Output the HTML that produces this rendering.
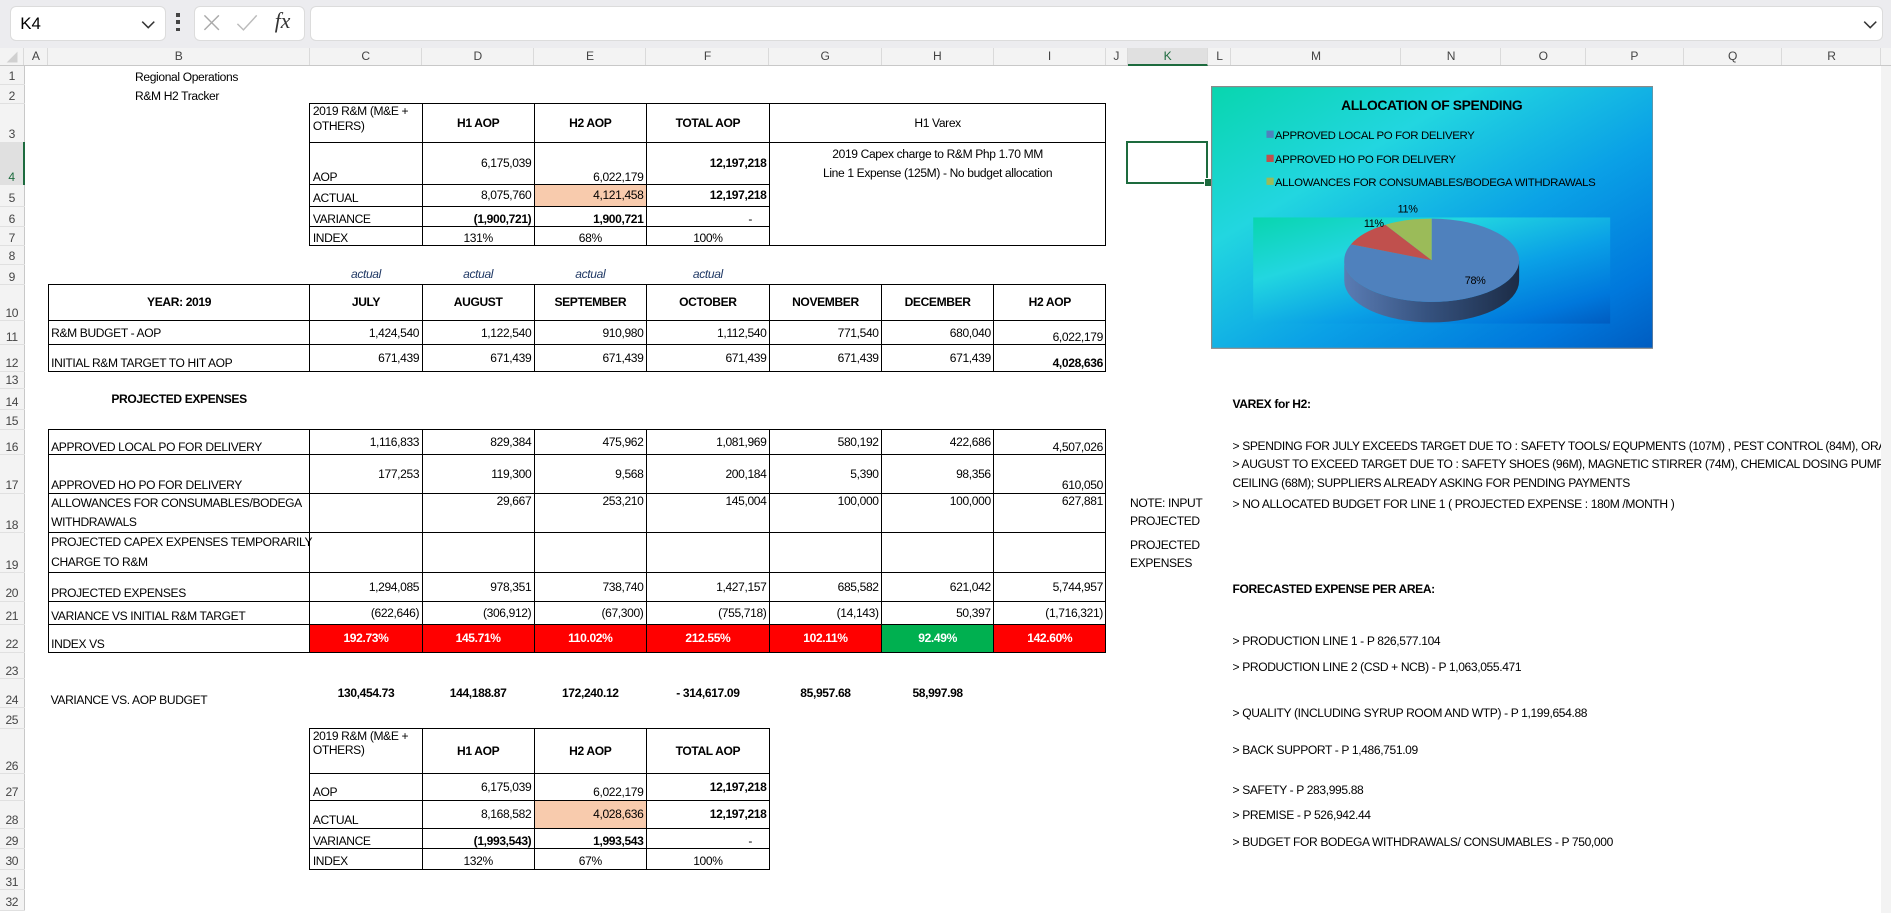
<!DOCTYPE html>
<html><head><meta charset="utf-8">
<style>
html,body{margin:0;padding:0;background:#fff;}
body{width:1568px;height:757px;zoom:1.20600;overflow:hidden;position:relative;font-family:"Liberation Sans",sans-serif;font-size:10px;letter-spacing:-0.3px;color:#000;}
.fb{position:absolute;left:0;top:0;width:1568px;height:40px;background:#ececef;}
.box{position:absolute;background:#fff;border:1px solid #dcdcdc;border-radius:5px;}
.hdr{position:absolute;left:0;top:40px;width:1568px;height:15px;background:#f3f3f3;border-bottom:1px solid #c8c8c8;box-sizing:border-box;}
.hdr div{position:absolute;top:0;height:14px;line-height:14px;text-align:center;color:#444;font-size:10px;border-right:1px solid #dadada;box-sizing:border-box;}
table.s{position:absolute;left:0;top:55px;border-collapse:collapse;table-layout:fixed;width:1568px;}
table.s td{padding:0 2px;white-space:nowrap;vertical-align:bottom;overflow:visible;line-height:12px;}
td.rh{background:#f3f3f3;color:#444;text-align:center;border-right:1px solid #c8c8c8;border-bottom:1px solid #e0e0e0;padding:0!important;}
.b{border:1px solid #000;}
.r{text-align:right;}.c{text-align:center;}.bd{font-weight:bold;}
.m{vertical-align:middle!important;}.t{vertical-align:top!important;}
.w{white-space:normal!important;}
.pe{background:#f8cbad;}
.red{background:#ff0000;color:#fff;font-weight:bold;text-align:center;vertical-align:middle!important;}
.grn{background:#00b050;color:#fff;font-weight:bold;text-align:center;vertical-align:middle!important;}
.it{font-style:italic;color:#1f3864;text-align:center;}
.tx{position:absolute;white-space:nowrap;line-height:12px;}
</style></head><body>
<div class="fb">
 <div class="box" style="left:8px;top:5px;width:128px;height:27px;"><span style="position:absolute;left:8px;top:6px;font-size:14px;letter-spacing:0;">K4</span>
 <svg style="position:absolute;left:108px;top:9px" width="12" height="10"><path d="M1 3 L6 8 L11 3" stroke="#333" stroke-width="1.3" fill="none"/></svg></div>
 <div style="position:absolute;left:146px;top:11px;width:3px;height:16px;"><div style="width:3px;height:3px;background:#444;margin-bottom:3px"></div><div style="width:3px;height:3px;background:#444;margin-bottom:3px"></div><div style="width:3px;height:3px;background:#444"></div></div>
 <div class="box" style="left:161px;top:5px;width:90px;height:27px;">
  <svg style="position:absolute;left:6px;top:5px" width="16" height="16"><path d="M2 2 L14 14 M14 2 L2 14" stroke="#aaa" stroke-width="1.2"/></svg>
  <svg style="position:absolute;left:33px;top:5px" width="20" height="16"><path d="M2 9 L7 14 L18 2" stroke="#bbb" stroke-width="1.2" fill="none"/></svg>
  <span style="position:absolute;left:66px;top:2px;font-family:'Liberation Serif',serif;font-style:italic;font-size:18px;letter-spacing:0;color:#333">fx</span>
 </div>
 <div class="box" style="left:257px;top:5px;width:1303px;height:27px;">
  <svg style="position:absolute;right:4px;top:9px" width="12" height="10"><path d="M1 3 L6 8 L11 3" stroke="#333" stroke-width="1.3" fill="none"/></svg></div>
</div>
<div class="hdr">
 <div style="left:0;width:20px;"><svg width="14" height="14"><path d="M12 3 L12 12 L3 12 Z" fill="#d0d0d0"/></svg></div>
 <div style="left:20px;width:20px;">A</div><div style="left:40px;width:217px;">B</div><div style="left:257px;width:93px;">C</div><div style="left:350px;width:93px;">D</div><div style="left:443px;width:93px;">E</div><div style="left:536px;width:102px;">F</div><div style="left:638px;width:93px;">G</div><div style="left:731px;width:93px;">H</div><div style="left:824px;width:93px;">I</div><div style="left:917px;width:18px;">J</div>
 <div style="left:935px;width:67px;background:#e0e0e0;color:#1d6b3e;border-bottom:2px solid #1d6b3e;height:15px;">K</div>
 <div style="left:1002px;width:19px;">L</div><div style="left:1021px;width:141px;">M</div><div style="left:1162px;width:83px;">N</div><div style="left:1245px;width:70px;">O</div><div style="left:1315px;width:81px;">P</div><div style="left:1396px;width:82px;">Q</div><div style="left:1478px;width:82px;">R</div>
</div>
<table class="s">
<colgroup><col style="width:20px"><col style="width:20px"><col style="width:217px"><col style="width:93px"><col style="width:93px"><col style="width:93px"><col style="width:102px"><col style="width:93px"><col style="width:93px"><col style="width:93px"><col style="width:651px"></colgroup>
<tr style="height:15px"><td class="rh">1</td><td></td><td style="padding-left:72px">Regional Operations</td><td colspan="8"></td></tr>
<tr style="height:16px"><td class="rh">2</td><td></td><td style="padding-left:72px">R&amp;M H2 Tracker</td><td colspan="8"></td></tr>
<tr style="height:32px"><td class="rh">3</td><td></td><td></td><td class="b w t">2019 R&amp;M (M&amp;E + OTHERS)</td><td class="b c bd m">H1 AOP</td><td class="b c bd m">H2 AOP</td><td class="b c bd m">TOTAL AOP</td><td class="b c m" colspan="3">H1 Varex</td><td></td></tr>
<tr style="height:35px"><td class="rh" style="background:#e0e0e0;color:#1d6b3e;border-right:2px solid #1d6b3e">4</td><td></td><td></td><td class="b">AOP</td><td class="b r m">6,175,039</td><td class="b r">6,022,179</td><td class="b r bd m">12,197,218</td><td class="b c t" colspan="3" rowspan="4" style="padding-top:2px;line-height:16px">2019 Capex charge to R&amp;M Php 1.70 MM<br>Line 1 Expense (125M) - No budget allocation</td><td></td></tr>
<tr style="height:18px"><td class="rh">5</td><td></td><td></td><td class="b">ACTUAL</td><td class="b r m">8,075,760</td><td class="b r m pe">4,121,458</td><td class="b r bd m">12,197,218</td><td></td></tr>
<tr style="height:17px"><td class="rh">6</td><td></td><td></td><td class="b">VARIANCE</td><td class="b r bd">(1,900,721)</td><td class="b r bd">1,900,721</td><td class="b r" style="padding-right:14px">-</td><td></td></tr>
<tr style="height:16px"><td class="rh">7</td><td></td><td></td><td class="b">INDEX</td><td class="b c">131%</td><td class="b c">68%</td><td class="b c">100%</td><td></td></tr>
<tr style="height:15px"><td class="rh">8</td><td colspan="10"></td></tr>
<tr style="height:17px"><td class="rh">9</td><td></td><td></td><td class="it m">actual</td><td class="it m">actual</td><td class="it m">actual</td><td class="it m">actual</td><td colspan="4"></td></tr>
<tr style="height:30px"><td class="rh">10</td><td></td><td class="b c bd m">YEAR: 2019</td><td class="b c bd m">JULY</td><td class="b c bd m">AUGUST</td><td class="b c bd m">SEPTEMBER</td><td class="b c bd m">OCTOBER</td><td class="b c bd m">NOVEMBER</td><td class="b c bd m">DECEMBER</td><td class="b c bd m">H2 AOP</td><td></td></tr>
<tr style="height:20px"><td class="rh">11</td><td></td><td class="b m">R&amp;M BUDGET - AOP</td><td class="b r m">1,424,540</td><td class="b r m">1,122,540</td><td class="b r m">910,980</td><td class="b r m">1,112,540</td><td class="b r m">771,540</td><td class="b r m">680,040</td><td class="b r">6,022,179</td><td></td></tr>
<tr style="height:22px"><td class="rh">12</td><td></td><td class="b">INITIAL R&amp;M TARGET TO HIT AOP</td><td class="b r m">671,439</td><td class="b r m">671,439</td><td class="b r m">671,439</td><td class="b r m">671,439</td><td class="b r m">671,439</td><td class="b r m">671,439</td><td class="b r bd">4,028,636</td><td></td></tr>
<tr style="height:14px"><td class="rh">13</td><td colspan="10"></td></tr>
<tr style="height:18px"><td class="rh">14</td><td></td><td class="c bd m">PROJECTED EXPENSES</td><td colspan="8"></td></tr>
<tr style="height:16px"><td class="rh">15</td><td colspan="10"></td></tr>
<tr style="height:21px"><td class="rh">16</td><td></td><td class="b">APPROVED LOCAL PO FOR DELIVERY</td><td class="b r m">1,116,833</td><td class="b r m">829,384</td><td class="b r m">475,962</td><td class="b r m">1,081,969</td><td class="b r m">580,192</td><td class="b r m">422,686</td><td class="b r">4,507,026</td><td></td></tr>
<tr style="height:32px"><td class="rh">17</td><td></td><td class="b">APPROVED HO PO FOR DELIVERY</td><td class="b r m">177,253</td><td class="b r m">119,300</td><td class="b r m">9,568</td><td class="b r m">200,184</td><td class="b r m">5,390</td><td class="b r m">98,356</td><td class="b r">610,050</td><td></td></tr>
<tr style="height:32px"><td class="rh">18</td><td></td><td class="b" style="line-height:16px">ALLOWANCES FOR CONSUMABLES/BODEGA<br>WITHDRAWALS</td><td class="b r t"></td><td class="b r t">29,667</td><td class="b r t">253,210</td><td class="b r t">145,004</td><td class="b r t">100,000</td><td class="b r t">100,000</td><td class="b r t">627,881</td><td></td></tr>
<tr style="height:33px"><td class="rh">19</td><td></td><td class="b" style="line-height:16px">PROJECTED CAPEX EXPENSES TEMPORARILY<br>CHARGE TO R&amp;M</td><td class="b"></td><td class="b"></td><td class="b"></td><td class="b"></td><td class="b"></td><td class="b"></td><td class="b"></td><td></td></tr>
<tr style="height:24px"><td class="rh">20</td><td></td><td class="b">PROJECTED EXPENSES</td><td class="b r m">1,294,085</td><td class="b r m">978,351</td><td class="b r m">738,740</td><td class="b r m">1,427,157</td><td class="b r m">685,582</td><td class="b r m">621,042</td><td class="b r m">5,744,957</td><td></td></tr>
<tr style="height:19px"><td class="rh">21</td><td></td><td class="b">VARIANCE VS INITIAL R&amp;M TARGET</td><td class="b r m">(622,646)</td><td class="b r m">(306,912)</td><td class="b r m">(67,300)</td><td class="b r m">(755,718)</td><td class="b r m">(14,143)</td><td class="b r m">50,397</td><td class="b r m">(1,716,321)</td><td></td></tr>
<tr style="height:23px"><td class="rh">22</td><td></td><td class="b">INDEX VS</td><td class="b red">192.73%</td><td class="b red">145.71%</td><td class="b red">110.02%</td><td class="b red">212.55%</td><td class="b red">102.11%</td><td class="b grn">92.49%</td><td class="b red">142.60%</td><td></td></tr>
<tr style="height:22px"><td class="rh">23</td><td colspan="10"></td></tr>
<tr style="height:24px"><td class="rh">24</td><td></td><td>VARIANCE VS. AOP BUDGET</td><td class="c bd m">130,454.73</td><td class="c bd m">144,188.87</td><td class="c bd m">172,240.12</td><td class="c bd m">- 314,617.09</td><td class="c bd m">85,957.68</td><td class="c bd m">58,997.98</td><td colspan="2"></td></tr>
<tr style="height:17px"><td class="rh">25</td><td colspan="10"></td></tr>
<tr style="height:38px"><td class="rh">26</td><td></td><td></td><td class="b w t">2019 R&amp;M (M&amp;E + OTHERS)</td><td class="b c bd m">H1 AOP</td><td class="b c bd m">H2 AOP</td><td class="b c bd m">TOTAL AOP</td><td colspan="4"></td></tr>
<tr style="height:22px"><td class="rh">27</td><td></td><td></td><td class="b">AOP</td><td class="b r m">6,175,039</td><td class="b r">6,022,179</td><td class="b r bd m">12,197,218</td><td colspan="4"></td></tr>
<tr style="height:23px"><td class="rh">28</td><td></td><td></td><td class="b">ACTUAL</td><td class="b r m">8,168,582</td><td class="b r m pe">4,028,636</td><td class="b r bd m">12,197,218</td><td colspan="4"></td></tr>
<tr style="height:17px"><td class="rh">29</td><td></td><td></td><td class="b">VARIANCE</td><td class="b r bd">(1,993,543)</td><td class="b r bd">1,993,543</td><td class="b r" style="padding-right:14px">-</td><td colspan="4"></td></tr>
<tr style="height:17px"><td class="rh">30</td><td></td><td></td><td class="b">INDEX</td><td class="b c">132%</td><td class="b c">67%</td><td class="b c">100%</td><td colspan="4"></td></tr>
<tr style="height:17px"><td class="rh">31</td><td colspan="10"></td></tr>
<tr style="height:17px"><td class="rh">32</td><td colspan="10"></td></tr>
</table>
<div style="position:absolute;left:934px;top:117px;width:64px;height:32px;border:2px solid #1d6b3e;"></div>
<div style="position:absolute;left:998px;top:148px;width:5px;height:5px;background:#1d6b3e;border:1px solid #fff;"></div>

<div class="tx" style="left:937px;top:411px">NOTE: INPUT</div>
<div class="tx" style="left:937px;top:426px">PROJECTED</div>
<div class="tx" style="left:937px;top:446px">PROJECTED</div>
<div class="tx" style="left:937px;top:461px">EXPENSES</div>
<div class="tx bd" style="left:1022px;top:329px;font-weight:bold">VAREX for H2:</div>
<div class="tx" style="left:1022px;top:364px">&gt; SPENDING FOR JULY EXCEEDS TARGET DUE TO : SAFETY TOOLS/ EQUPMENTS (107M) , PEST CONTROL (84M), ORACLE</div>
<div class="tx" style="left:1022px;top:379px">&gt; AUGUST TO EXCEED TARGET DUE TO : SAFETY SHOES (96M), MAGNETIC STIRRER (74M), CHEMICAL DOSING PUMP</div>
<div class="tx" style="left:1022px;top:395px">CEILING (68M); SUPPLIERS ALREADY ASKING FOR PENDING PAYMENTS</div>
<div class="tx" style="left:1022px;top:412px">&gt; NO ALLOCATED BUDGET FOR LINE 1 ( PROJECTED EXPENSE : 180M /MONTH )</div>
<div class="tx" style="left:1022px;top:483px;font-weight:bold">FORECASTED EXPENSE PER AREA:</div>
<div class="tx" style="left:1022px;top:526px">&gt; PRODUCTION LINE 1 - P 826,577.104</div>
<div class="tx" style="left:1022px;top:547px">&gt; PRODUCTION LINE 2 (CSD + NCB) - P 1,063,055.471</div>
<div class="tx" style="left:1022px;top:585px">&gt; QUALITY (INCLUDING SYRUP ROOM AND WTP) - P 1,199,654.88</div>
<div class="tx" style="left:1022px;top:616px">&gt; BACK SUPPORT - P 1,486,751.09</div>
<div class="tx" style="left:1022px;top:649px">&gt; SAFETY - P 283,995.88</div>
<div class="tx" style="left:1022px;top:670px">&gt; PREMISE - P 526,942.44</div>
<div class="tx" style="left:1022px;top:692px">&gt; BUDGET FOR BODEGA WITHDRAWALS/ CONSUMABLES - P 750,000</div>
<div style="position:absolute;left:1560px;top:55px;width:8px;height:702px;background:#f3f3f3;"></div>

<svg style="position:absolute;left:1004px;top:71px" width="367" height="218">
<defs>
<linearGradient id="bg" x1="0" y1="0" x2="1" y2="1"><stop offset="0" stop-color="#08d6ae"/><stop offset="0.3" stop-color="#22d6e0"/><stop offset="0.6" stop-color="#0aa0e6"/><stop offset="0.85" stop-color="#0078dc"/><stop offset="1" stop-color="#005cc0"/></linearGradient>
<linearGradient id="side" x1="0" y1="0" x2="1" y2="0"><stop offset="0" stop-color="#5a7cb4"/><stop offset="0.5" stop-color="#34507c"/><stop offset="1" stop-color="#1c2c46"/></linearGradient>
</defs>
<rect x="0.5" y="0.5" width="366" height="217" fill="url(#bg)" stroke="#8a8a8a"/>
<rect x="35" y="109" width="296" height="88" fill="url(#bg)"/>
<text x="183" y="20" text-anchor="middle" font-family="Liberation Sans" font-weight="bold" font-size="11.5" letter-spacing="-0.3">ALLOCATION OF SPENDING</text>
<rect x="46" y="37" width="6" height="6" fill="#4f81bd"/><text x="53" y="44" font-family="Liberation Sans" font-size="9.5" letter-spacing="-0.3">APPROVED LOCAL PO FOR DELIVERY</text>
<rect x="46" y="57" width="6" height="6" fill="#c0504d"/><text x="53" y="64" font-family="Liberation Sans" font-size="9.5" letter-spacing="-0.3">APPROVED HO PO FOR DELIVERY</text>
<rect x="46" y="76" width="6" height="6" fill="#9bbb59"/><text x="53" y="83" font-family="Liberation Sans" font-size="9.5" letter-spacing="-0.3">ALLOWANCES FOR CONSUMABLES/BODEGA WITHDRAWALS</text>
<path d="M110.5,144.5 A72.5,34.5 0 0 0 255.5,144.5 L255.5,161.5 A72.5,34.5 0 0 1 110.5,161.5 Z" fill="url(#side)"/>
<path d="M183,144.5 L183,110 A72.5,34.5 0 1 1 116,131.3 Z" fill="#4f81bd"/>
<path d="M183,144.5 L116,131.3 A72.5,34.5 0 0 1 144.6,115 Z" fill="#c0504d"/>
<path d="M183,144.5 L144.6,115 A72.5,34.5 0 0 1 183,110 Z" fill="#9bbb59"/>
<text x="135" y="117" text-anchor="middle" font-family="Liberation Sans" font-size="9">11%</text>
<text x="163" y="105" text-anchor="middle" font-family="Liberation Sans" font-size="9">11%</text>
<text x="219" y="164" text-anchor="middle" font-family="Liberation Sans" font-size="9">78%</text>
</svg>
</body></html>
